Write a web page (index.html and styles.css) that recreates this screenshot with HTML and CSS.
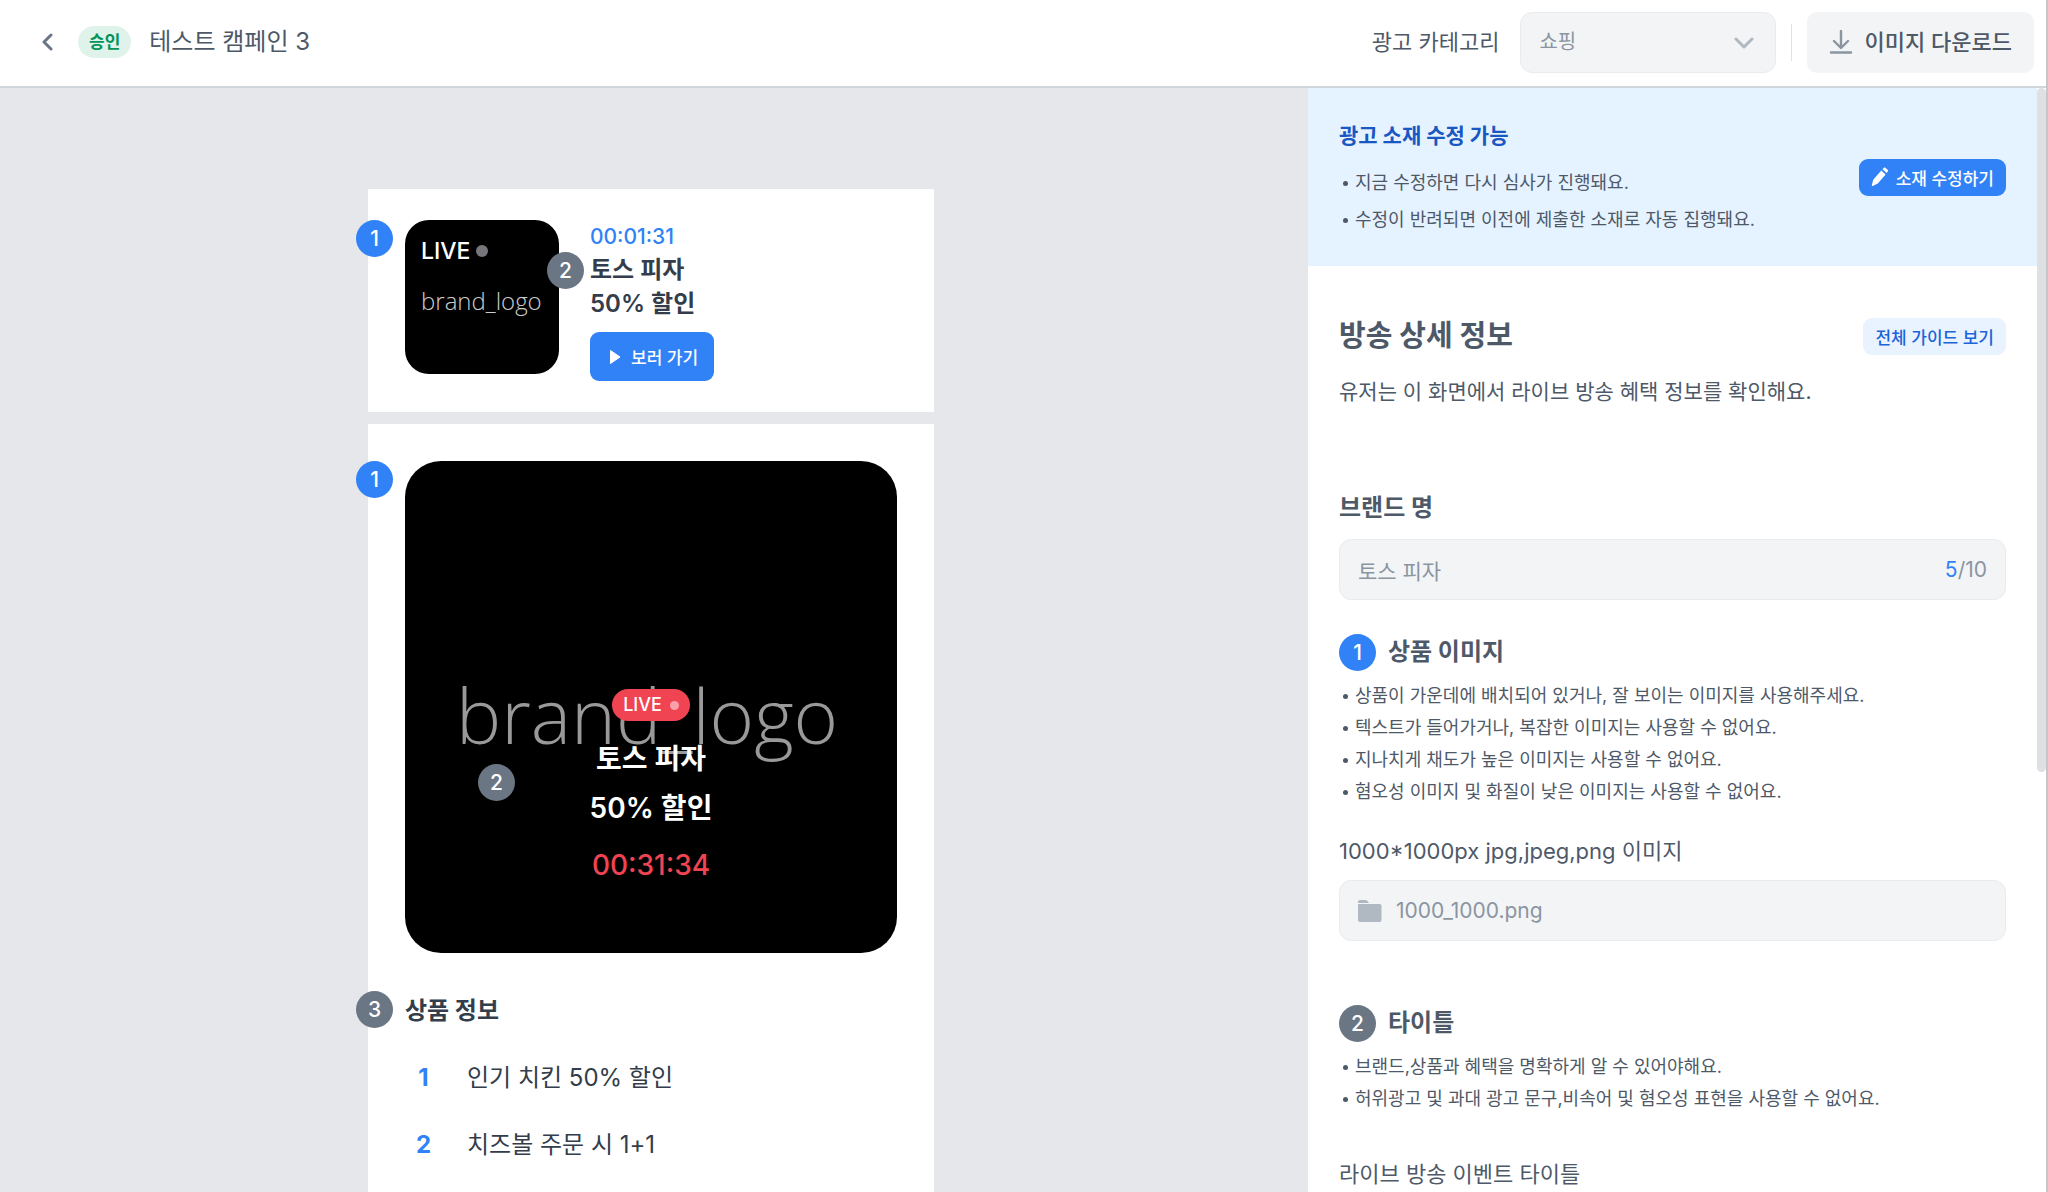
FILE: index.html
```html
<!DOCTYPE html>
<html lang="ko">
<head>
    <meta charset="UTF-8">
    <meta name="viewport" content="width=device-width, initial-scale=1.0">
    <title>테스트 캠페인 3</title>
    <link rel="stylesheet" href="styles.css">
</head>
<body>
    <header class="topbar">
        <button class="back-button" type="button" aria-label="뒤로">
            <svg width="12" height="20" viewBox="0 0 12 20" fill="none" stroke="#6b7684" stroke-width="3" stroke-linecap="round" stroke-linejoin="round"><path d="M10 3L3 10l7 7"/></svg>
        </button>
        <span class="status-badge">승인</span>
        <h1 class="campaign-title">테스트 캠페인 3</h1>

        <div class="topbar-actions">
            <label class="category-label" for="category">광고 카테고리</label>
            <div class="select-wrap">
                <select class="category-select" id="category" disabled>
                    <option>쇼핑</option>
                </select>
                <svg class="select-arrow" width="20" height="14" viewBox="0 0 20 14" fill="none" stroke="#b0b8c1" stroke-width="3" stroke-linecap="round" stroke-linejoin="round"><path d="M2 3l8 8 8-8"/></svg>
            </div>
            <span class="divider"></span>
            <button class="download-button" type="button">
                <svg width="24" height="24" viewBox="0 0 24 24" fill="none" stroke="#8b95a1" stroke-width="2.4" stroke-linecap="round" stroke-linejoin="round"><path d="M12 1v16M5 11l7 7 7-7M2 22.500h20"/></svg>
                이미지 다운로드
            </button>
        </div>
    </header>

    <div class="workspace">
        <main class="canvas">
            <section class="preview-card banner-card">
                <span class="marker blue edge-marker">1</span>
                <div class="thumb">
                    <div class="thumb-live">LIVE <span class="dot"></span></div>
                    <div class="thumb-logo">brand_logo</div>
                    <span class="marker gray thumb-marker">2</span>
                </div>
                <div class="banner-info">
                    <div class="banner-time">00:01:31</div>
                    <div class="banner-title">토스 피자<br>50% 할인</div>
                    <button class="watch-button" type="button">
                        <svg width="12" height="16" viewBox="0 0 12 16"><path d="M1.500 1.500v13L11 8z" fill="#fff" stroke="#fff" stroke-linejoin="round"/></svg>
                        보러 가기
                    </button>
                </div>
            </section>

            <section class="preview-card detail-card">
                <div class="poster-row">
                    <span class="marker blue edge-marker">1</span>
                    <div class="poster">
                        <div class="poster-logo">brand_logo</div>
                        <span class="marker gray poster-marker">2</span>
                        <div class="poster-text">
                            <span class="live-pill">LIVE <span class="dot"></span></span>
                            <div class="poster-title">토스 피자<br>50% 할인</div>
                            <div class="poster-time">00:31:34</div>
                        </div>
                    </div>
                </div>
                <div class="product-info">
                    <span class="marker gray edge-marker">3</span>
                    <h2>상품 정보</h2>
                    <ol class="product-list">
                        <li><span class="product-number">1</span>인기 치킨 50% 할인</li>
                        <li><span class="product-number">2</span>치즈볼 주문 시 1+1</li>
                    </ol>
                </div>
            </section>
        </main>

        <aside class="panel">
            <div class="panel-scroll">
                <div class="notice">
                    <div>
                        <h2 class="notice-title">광고 소재 수정 가능</h2>
                        <ul class="bullets notice-bullets">
                            <li>지금 수정하면 다시 심사가 진행돼요.</li>
                            <li>수정이 반려되면 이전에 제출한 소재로 자동 집행돼요.</li>
                        </ul>
                    </div>
                    <button class="small-button primary" type="button">
                        <svg width="18" height="20" viewBox="0 0 18 20" fill="#fff"><path d="M10.300 3.600l4.300 3.800-7.800 9.100L1.700 19c-.6.300-1-.1-.9-.7l1.400-5.500zM11.500 2.200l1.200-1.300c.5-.6 1.200-.6 1.700-.2l2.200 2c.6.500.6 1.200.1 1.700L15.700 5.900z"/></svg>
                        소재 수정하기
                    </button>
                </div>

                <div class="form">
                    <div class="form-head">
                        <h2 class="form-title">방송 상세 정보</h2>
                        <button class="small-button light" type="button">전체 가이드 보기</button>
                    </div>
                    <p class="form-desc">유저는 이 화면에서 라이브 방송 혜택 정보를 확인해요.</p>

                    <section class="field-group brand-group">
                        <label class="section-title" for="brand">브랜드 명</label>
                        <div class="field">
                            <input id="brand" type="text" value="토스 피자" disabled>
                            <span class="counter"><span class="count">5</span>/10</span>
                        </div>
                    </section>

                    <section class="field-group">
                        <h3 class="section-title"><span class="marker blue">1</span>상품 이미지</h3>
                        <ul class="bullets">
                            <li>상품이 가운데에 배치되어 있거나, 잘 보이는 이미지를 사용해주세요.</li>
                            <li>텍스트가 들어가거나, 복잡한 이미지는 사용할 수 없어요.</li>
                            <li>지나치게 채도가 높은 이미지는 사용할 수 없어요.</li>
                            <li>혐오성 이미지 및 화질이 낮은 이미지는 사용할 수 없어요.</li>
                        </ul>
                        <label class="field-label" for="image">1000*1000px jpg,jpeg,png 이미지</label>
                        <div class="field">
                            <svg width="24" height="24" viewBox="0 0 24 24" fill="#b0b8c1"><path d="M0 4V3c0-1.200.8-2 2-2h5.500c.8 0 1.400.3 1.900.9L11 4zM0 5h21.500c1.200 0 2 .8 2 2v14c0 1.200-.8 2-2 2H2c-1.200 0-2-.8-2-2z"/></svg>
                            <input id="image" type="text" value="1000_1000.png" disabled>
                        </div>
                    </section>

                    <section class="field-group title-group">
                        <h3 class="section-title"><span class="marker gray">2</span>타이틀</h3>
                        <ul class="bullets">
                            <li>브랜드,상품과 혜택을 명확하게 알 수 있어야해요.</li>
                            <li>허위광고 및 과대 광고 문구,비속어 및 혐오성 표현을 사용할 수 없어요.</li>
                        </ul>
                        <div class="field-label">라이브 방송 이벤트 타이틀</div>
                    </section>
                </div>
            </div>
            <span class="scroll-thumb"></span>
        </aside>
    </div>
</body>
</html>
```

FILE: styles.css
```css
* {
    margin: 0;
    padding: 0;
    box-sizing: border-box;
}

body {
    display: flex;
    flex-direction: column;
    height: 100vh;
    overflow: hidden;
    border-right: 2px solid #c4c6c9;
    background: #fff;
    color: #4e5968;
    font-family: Inter, "Noto Sans CJK KR", sans-serif;
    font-size: 21px;
}

button, input, select {
    font: inherit;
    color: inherit;
    border: none;
    background: none;
}

button {
    cursor: pointer;
    white-space: nowrap;
}

svg {
    flex: none;
}

ul, ol {
    list-style: none;
}

/* top bar */
.topbar {
    display: flex;
    align-items: center;
    flex: none;
    height: 88px;
    padding: 0 12px 2px 41px;
    border-bottom: 2px solid #d1d6db;
}

.back-button {
    display: flex;
    margin-right: 25px;
}

.status-badge {
    padding: 0 11px;
    border-radius: 16px;
    background: #dff3eb;
    color: #029359;
    font-size: 17px;
    font-weight: 700;
    line-height: 32px;
}

.campaign-title {
    margin-left: 18px;
    font-size: 24px;
    font-weight: 400;
    line-height: 34px;
}

.topbar-actions {
    display: flex;
    align-items: center;
    margin-left: auto;
}

.category-label {
    margin-right: 21px;
    font-size: 22px;
    line-height: 32px;
}

.select-wrap {
    position: relative;
}

.category-select {
    appearance: none;
    width: 256px;
    height: 61px;
    padding: 0 18px;
    border: 1px solid #e9ebee;
    border-radius: 12px;
    background: #f2f4f6;
    color: #8b95a1;
    font-size: 20px;
    opacity: 1;
}

.select-arrow {
    position: absolute;
    top: 24px;
    right: 22px;
}

.divider {
    width: 1px;
    height: 37px;
    margin: 0 15px;
    background: #dfe2e6;
}

.download-button {
    display: flex;
    align-items: center;
    gap: 11px;
    height: 61px;
    padding: 0 22px;
    border-radius: 10px;
    background: #f2f4f6;
    font-size: 22px;
    font-weight: 500;
    line-height: 32px;
}

/* layout */
.workspace {
    display: grid;
    grid-template-columns: minmax(0, 1fr) 738px;
    flex: 1;
    min-height: 0;
}

.canvas {
    display: flex;
    flex-direction: column;
    align-items: center;
    gap: 12px;
    padding: 101px 6px 0 0;
    background: #e5e7eb;
    overflow: hidden;
}

.preview-card {
    position: relative;
    flex: none;
    width: 100%;
    max-width: 566px;
    background: #fff;
    color: #333d4b;
}

.marker {
    display: inline-block;
    flex: none;
    width: 37px;
    height: 37px;
    border-radius: 50%;
    color: #fff;
    font-size: 21px;
    font-weight: 500;
    line-height: 37px;
    text-align: center;
}

.marker.blue {
    background: #3182f6;
}

.marker.gray {
    background: #6b7684;
}

.edge-marker {
    position: absolute;
    left: -12px;
}

/* small banner */
.banner-card {
    display: flex;
    gap: 31px;
    padding: 31px 37px;
}

.thumb {
    position: relative;
    width: 154px;
    height: 154px;
    padding: 15px 16px;
    border-radius: 24px;
    background: #000;
    color: #fff;
}

.thumb-live {
    display: flex;
    align-items: center;
    gap: 6px;
    font-size: 23px;
    font-weight: 500;
    line-height: 32px;
}

.thumb-live .dot {
    width: 12px;
    height: 12px;
    border-radius: 50%;
    background: #77767d;
}

.thumb-logo {
    margin-top: 16px;
    color: #ccc;
    font-family: "Open Sans", sans-serif;
    font-size: 24px;
    font-weight: 300;
    line-height: 36px;
}

.thumb-marker {
    position: absolute;
    top: 32px;
    right: -25px;
}

.banner-time {
    color: #3182f6;
    font-size: 21px;
    font-weight: 500;
    line-height: 33px;
}

.banner-title {
    font-size: 24px;
    font-weight: 600;
    line-height: 34px;
}

.watch-button {
    display: flex;
    align-items: center;
    gap: 10px;
    height: 49px;
    margin-top: 11px;
    padding: 0 16px 0 19px;
    border-radius: 9px;
    background: #3182f6;
    color: #fff;
    font-size: 17px;
    font-weight: 500;
}

/* detail preview */
.detail-card {
    padding: 37px 37px 60px;
}

.poster {
    position: relative;
    display: flex;
    flex-direction: column;
    justify-content: flex-end;
    aspect-ratio: 1;
    padding-bottom: 68px;
    border-radius: 36px;
    background: #000;
    color: #fff;
}

.poster-row .edge-marker {
    z-index: 1;
}

.poster-logo {
    position: absolute;
    top: 204px;
    left: 51px;
    font-family: "Open Sans", sans-serif;
    font-size: 76px;
    font-weight: 300;
    line-height: 100px;
    color: #999;
}

.poster-marker {
    position: absolute;
    top: 303px;
    left: 73px;
}

.poster-text {
    position: relative;
    display: flex;
    flex-direction: column;
    align-items: center;
    text-align: center;
}

.live-pill {
    display: flex;
    align-items: center;
    gap: 8px;
    padding: 0 11px;
    border-radius: 16px;
    background: #f04452;
    font-size: 18px;
    font-weight: 500;
    line-height: 32px;
}

.live-pill .dot {
    width: 9px;
    height: 9px;
    border-radius: 50%;
    background: #f8a1a8;
}

.poster-title {
    margin-top: 14px;
    font-size: 28px;
    font-weight: 600;
    line-height: 49px;
}

.poster-time {
    margin-top: 12px;
    color: #f04452;
    font-size: 28px;
    font-weight: 500;
    line-height: 40px;
}

.product-info {
    position: relative;
    margin-top: 38px;
}

.product-info .edge-marker {
    left: -49px;
}

.product-info h2 {
    font-size: 24px;
    line-height: 40px;
}

.product-list {
    margin-top: 13px;
    font-size: 24px;
}

.product-list li {
    display: flex;
    line-height: 67px;
}

.product-number {
    width: 37px;
    margin-right: 25px;
    color: #3182f6;
    font-weight: 700;
    text-align: center;
}

/* right panel */
.panel {
    position: relative;
    min-height: 0;
    background: #fff;
}

.panel-scroll {
    height: 100%;
    margin-right: 9px;
    overflow: hidden;
}

.scroll-thumb {
    position: absolute;
    top: 0;
    right: 0;
    width: 9px;
    height: 62%;
    border-radius: 5px;
    background: #dfe0e2;
}

.notice {
    display: flex;
    align-items: center;
    justify-content: space-between;
    padding: 28px 31px;
    background: #e5f2ff;
}

.notice-title {
    color: #1957c2;
    font-size: 21px;
    font-weight: 700;
    line-height: 40px;
}

.notice-bullets {
    margin-top: 8px;
}

.notice .bullets li {
    line-height: 37px;
}

.bullets li {
    position: relative;
    padding-left: 16px;
    font-size: 18px;
    line-height: 32px;
}

.bullets li::before {
    content: "";
    position: absolute;
    top: calc(50% - 2px);
    left: 4px;
    width: 5px;
    height: 5px;
    border-radius: 50%;
    background: #4e5968;
}

.small-button {
    display: flex;
    align-items: center;
    gap: 7px;
    height: 37px;
    padding: 0 12px;
    border-radius: 9px;
    font-size: 17px;
    font-weight: 500;
}

.small-button.primary {
    background: #3182f6;
    color: #fff;
}

.small-button.light {
    background: #e8f3ff;
    color: #1b64da;
}

.form {
    padding: 49px 31px;
}

.form-head {
    display: flex;
    align-items: center;
    justify-content: space-between;
}

.form-title {
    font-size: 29px;
    line-height: 42px;
}

.form-desc {
    margin-top: 18px;
    line-height: 34px;
}

.field-group {
    margin-top: 32px;
}

.brand-group {
    margin-top: 79px;
}

.title-group {
    margin-top: 62px;
}

.section-title {
    display: flex;
    align-items: center;
    gap: 12px;
    margin-bottom: 8px;
    font-size: 24px;
    font-weight: 700;
    line-height: 40px;
}

.brand-group .section-title {
    margin-bottom: 11px;
}

.field {
    display: flex;
    align-items: center;
    gap: 14px;
    height: 61px;
    padding: 0 18px;
    border: 1px solid #e9ebee;
    border-radius: 12px;
    background: #f2f4f6;
    color: #8b95a1;
    font-size: 21px;
}

.field input {
    flex: 1;
    min-width: 0;
}

.count {
    color: #3182f6;
}

.field-label {
    display: block;
    margin: 26px 0 12px;
    font-size: 22px;
    line-height: 34px;
}

.title-group .field-label {
    margin-top: 42px;
}
```
